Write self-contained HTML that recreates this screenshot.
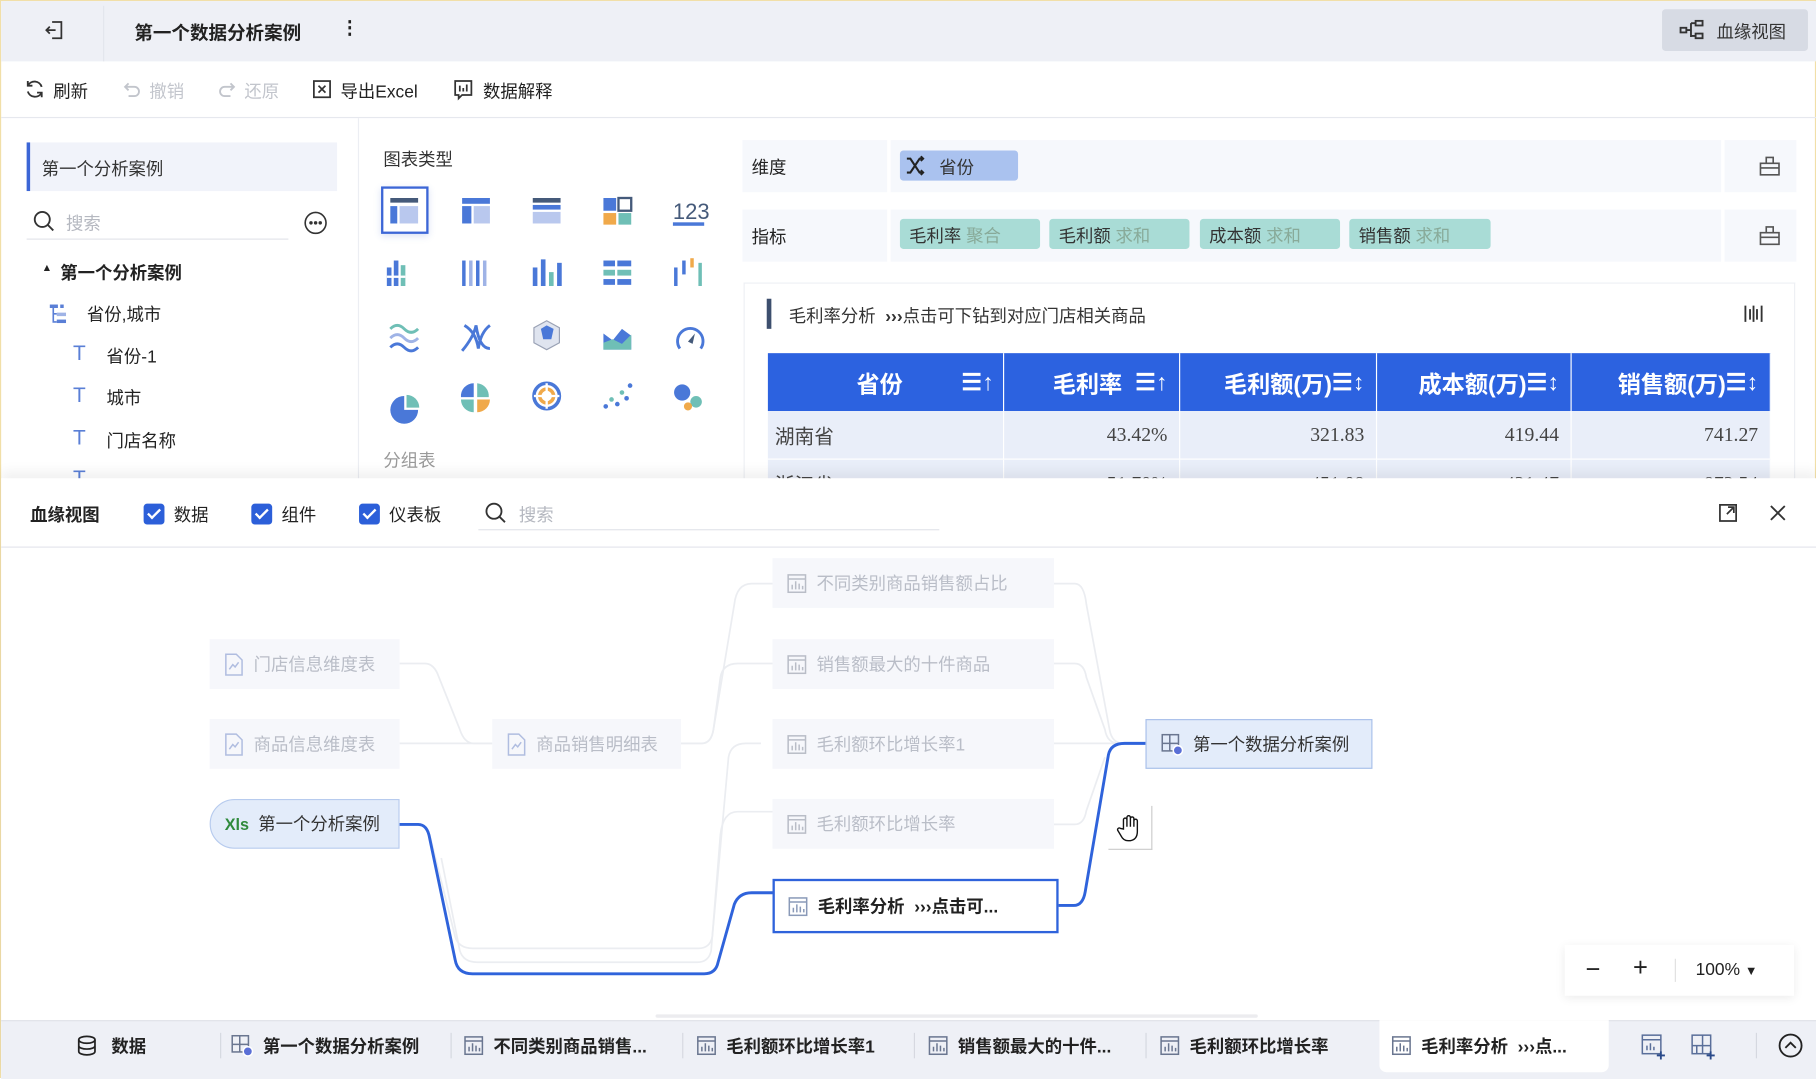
<!DOCTYPE html>
<html><head><meta charset="utf-8">
<style>
*{box-sizing:border-box;margin:0;padding:0}
html,body{width:1816px;height:1078px;overflow:hidden;background:#fff}
body{font-family:"Liberation Sans","Noto Sans CJK SC",sans-serif;color:#222}
#w{position:absolute;left:0;top:0;width:1568px;height:931px;transform:scale(1.1582,1.1579);transform-origin:0 0;background:#fff;border:1px solid #f1dfa8}
.a{position:absolute;white-space:nowrap}
.t15{font-size:15px}
.node{position:absolute;height:43px;background:#f6f7fb;color:#b9bdc7;font-size:15px;display:flex;align-items:center;padding-left:12px;gap:8px}
.tab{position:absolute;top:880px;height:44px;display:flex;align-items:center;gap:8px;font-size:15px;font-weight:bold;color:#222}
.sep{position:absolute;top:891px;width:1px;height:22px;background:#d5d8e0}
.th{position:absolute;top:304px;height:50px;color:#fff;font-weight:bold;font-size:20px;display:flex;align-items:center;justify-content:flex-end;padding-right:10px;border-right:1px solid #fff}
.td{position:absolute;height:41px;display:flex;align-items:center;justify-content:flex-end;padding-right:10px;font-family:"Liberation Serif","Noto Serif CJK SC",serif;font-size:17px;color:#444;border-right:1px solid #fff}
.cb{display:inline-block;width:18px;height:18px;background:#2c5fd9;border-radius:3px;vertical-align:-3px;margin-right:8px;position:relative}
.cb:after{content:"";position:absolute;left:6px;top:2px;width:4px;height:9px;border:solid #fff;border-width:0 2px 2px 0;transform:rotate(45deg)}
</style></head><body><div id="w">
<div class="a" style="left:0;top:0;width:1568px;height:52px;background:#eef0f6"></div>
<div class="a" style="left:88px;top:4px;width:1px;height:48px;background:#e2e5ec"></div>
<svg class="a" style="left:36px;top:15px" width="20" height="20" viewBox="0 0 20 20" fill="none" stroke="#333" stroke-width="1.5"><path d="M8 3h8v14H8M3 10h8M6 7l-3 3 3 3"/></svg>
<div class="a" style="left:115px;top:14px;font-size:16px;font-weight:bold">第一个数据分析案例</div>
<div class="a" style="left:293px;top:13px;font-size:16px;font-weight:bold">⋮</div>
<div class="a" style="left:1434px;top:7px;width:126px;height:36px;background:#d7dbe4;border-radius:3px"></div>
<svg class="a" style="left:1449px;top:16px" width="22" height="18" viewBox="0 0 22 18" fill="none" stroke="#333" stroke-width="1.6"><rect x="1" y="7" width="5" height="4"/><rect x="14" y="1" width="6" height="4"/><rect x="14" y="12" width="6" height="4"/><path d="M6 9h4M10 3v12M10 3h4M10 14h4"/></svg>
<div class="a t15" style="left:1481px;top:16px;color:#333">血缘视图</div>
<div class="a" style="left:0;top:100px;width:1568px;height:1px;background:#e6e8ee"></div>
<svg class="a" style="left:19px;top:66px" width="20" height="20" viewBox="0 0 20 20" fill="none" stroke="#333" stroke-width="1.6"><path d="M16 8a6.5 6.5 0 0 0-12-1M4 12a6.5 6.5 0 0 0 12 1M4 3v4h4M16 17v-4h-4"/></svg>
<div class="a t15" style="left:45px;top:67px">刷新</div>
<svg class="a" style="left:104px;top:67px" width="18" height="18" viewBox="0 0 18 18" fill="none" stroke="#c2c5cc" stroke-width="1.6"><path d="M4 7h7a4 4 0 0 1 0 8H6M6 4 3 7l3 3"/></svg>
<div class="a t15" style="left:128px;top:67px;color:#c2c5cc">撤销</div>
<svg class="a" style="left:186px;top:67px" width="18" height="18" viewBox="0 0 18 18" fill="none" stroke="#c2c5cc" stroke-width="1.6"><path d="M14 7H7a4 4 0 0 0 0 8h5M12 4l3 3-3 3"/></svg>
<div class="a t15" style="left:210px;top:67px;color:#c2c5cc">还原</div>
<svg class="a" style="left:268px;top:67px" width="18" height="18" viewBox="0 0 18 18" fill="none" stroke="#333" stroke-width="1.5"><rect x="2" y="2" width="14" height="14"/><path d="M6 6l6 6M12 6l-6 6"/></svg>
<div class="a t15" style="left:293px;top:67px">导出Excel</div>
<svg class="a" style="left:390px;top:67px" width="18" height="19" viewBox="0 0 18 19" fill="none" stroke="#333" stroke-width="1.5"><path d="M2 2h14v12H8l-3 3v-3H2z"/><path d="M6 6v5M9 8v3M12 5v6"/></svg>
<div class="a t15" style="left:416px;top:67px">数据解释</div>
<div class="a" style="left:22px;top:122px;width:268px;height:42px;background:#f1f3fa;border-left:3px solid #3c66d6"></div>
<div class="a t15" style="left:35px;top:134px;color:#333">第一个分析案例</div>
<svg class="a" style="left:27px;top:180px" width="20" height="20" viewBox="0 0 20 20" fill="none" stroke="#333" stroke-width="1.6"><circle cx="8.5" cy="8.5" r="6.5"/><path d="M13 13l5 5"/></svg>
<div class="a t15" style="left:56px;top:181px;color:#b5b8c0">搜索</div>
<div class="a" style="left:22px;top:205px;width:226px;height:1px;background:#e2e4ea"></div>
<svg class="a" style="left:261px;top:181px" width="21" height="21" viewBox="0 0 21 21" fill="none" stroke="#333" stroke-width="1.4"><circle cx="10.5" cy="10.5" r="9"/><circle cx="6.5" cy="10.5" r=".8" fill="#333"/><circle cx="10.5" cy="10.5" r=".8" fill="#333"/><circle cx="14.5" cy="10.5" r=".8" fill="#333"/></svg>
<div class="a" style="left:35px;top:225px;font-size:9px">▲</div>
<div class="a t15" style="left:51px;top:224px;font-weight:bold">第一个分析案例</div>
<svg class="a" style="left:41px;top:261px" width="18" height="18" viewBox="0 0 18 18"><rect x="1" y="1" width="7" height="3" fill="#5a7fd6"/><rect x="10" y="1" width="3" height="3" fill="#5a7fd6"/><rect x="7" y="8" width="8" height="3" fill="#9fb3e6"/><rect x="7" y="14" width="8" height="3" fill="#5a7fd6"/><path d="M4 4v12h3M4 9h3" stroke="#5a7fd6" stroke-width="1.4" fill="none"/></svg>
<div class="a t15" style="left:74px;top:260px">省份,城市</div>
<div class="a" style="left:62px;top:294px;font-size:18px;color:#5a7fd6">T</div><div class="a t15" style="left:91px;top:296px">省份-1</div>
<div class="a" style="left:62px;top:330px;font-size:18px;color:#5a7fd6">T</div><div class="a t15" style="left:91px;top:332px">城市</div>
<div class="a" style="left:62px;top:367px;font-size:18px;color:#5a7fd6">T</div><div class="a t15" style="left:91px;top:369px">门店名称</div>
<div class="a" style="left:62px;top:402px;font-size:18px;color:#5a7fd6">T</div>
<div class="a" style="left:308px;top:101px;width:1px;height:312px;background:#eceef3"></div>
<div class="a t15" style="left:330px;top:126px;color:#333">图表类型</div>
<div class="a" style="left:328px;top:160px;width:41px;height:41px;border:2px solid #3c66d6;box-shadow:0 2px 6px rgba(60,100,200,.2)"></div>
<svg class="a" style="left:320px;top:160px" width="300" height="210" viewBox="0 0 300 210">
<g transform="translate(16,10)"><rect width="24" height="4" fill="#455a7a"/><rect y="7" width="6" height="15" fill="#4a78d8"/><rect x="8" y="7" width="16" height="15" fill="#b9c8ee"/></g>
<g transform="translate(78,10)"><rect width="24" height="5" fill="#4a78d8"/><rect y="7" width="8" height="15" fill="#4a78d8"/><rect x="10" y="7" width="14" height="15" fill="#b9c8ee"/></g>
<g transform="translate(139,10)"><rect width="24" height="4" fill="#455a7a"/><rect y="6" width="24" height="4" fill="#4a78d8"/><rect y="12" width="24" height="10" fill="#b9c8ee"/></g>
<g transform="translate(200,10)"><rect width="11" height="11" fill="#4a78d8"/><rect x="13" width="11" height="11" fill="none" stroke="#455a7a" stroke-width="2"/><rect y="13" width="11" height="10" fill="#f0a94a"/><rect x="13" y="13" width="11" height="10" fill="#6fbfb6"/></g>
<text x="260" y="28" font-size="19" fill="#455a7a" font-family="Liberation Sans">123</text><rect x="260" y="31" width="27" height="3" fill="#4a78d8"/>
<g fill="#4a78d8"><rect x="19" y="64" width="4" height="22"/><rect x="25" y="68" width="4" height="18" fill="#6fbfb6"/><rect x="13" y="70" width="4" height="16"/><rect x="13" y="77" width="16" height="2" fill="#fff"/></g>
<g fill="#4a78d8"><rect x="78" y="64" width="3" height="22"/><rect x="84" y="64" width="3" height="22" fill="#9fb3e6"/><rect x="90" y="64" width="3" height="22"/><rect x="96" y="64" width="3" height="22" fill="#9fb3e6"/></g>
<g><rect x="139" y="70" width="4" height="16" fill="#4a78d8"/><rect x="146" y="63" width="4" height="23" fill="#4a78d8"/><rect x="153" y="74" width="4" height="12" fill="#6fbfb6"/><rect x="160" y="66" width="4" height="20" fill="#4a78d8"/></g>
<g><rect x="200" y="64" width="24" height="5" fill="#4a78d8"/><rect x="200" y="72" width="24" height="5" fill="#6fbfb6"/><rect x="200" y="80" width="24" height="5" fill="#4a78d8"/><rect x="210" y="62" width="2" height="25" fill="#fff"/></g>
<g><rect x="261" y="70" width="3" height="16" fill="#4a78d8"/><rect x="268" y="64" width="3" height="12" fill="#4a78d8"/><rect x="275" y="62" width="3" height="8" fill="#f0a94a"/><rect x="282" y="66" width="3" height="20" fill="#6fbfb6"/></g>
<g fill="none" stroke-width="2.5"><path d="M16 123q6-6 12 0t12 0" stroke="#6fbfb6"/><path d="M16 131q6-6 12 0t12 0" stroke="#9fb3e6"/><path d="M16 139q6-6 12 0t12 0" stroke="#4a78d8"/></g>
<path d="M78 142q10-12 12-22 3 20 12 20M80 120q10 6 12 20 2-14 10-20" fill="none" stroke="#4a78d8" stroke-width="2.5"/>
<path d="M151 116l11 6v13l-11 6-11-6v-13z" fill="#dfe4ef" stroke="#9aa2b5"/><path d="M146 123l5-3 6 3-2 9h-7z" fill="#4a78d8"/>
<path d="M200 141v-14l8 6 8-10 8 6v12z" fill="#4a78d8"/><path d="M200 141v-6l8-3 8 4 8-8v13z" fill="#6fbfb6"/>
<path d="M266 140a11 11 0 1 1 18 0" fill="none" stroke="#4a78d8" stroke-width="2.5"/><path d="M273 134l6-7-2 9z" fill="#455a7a"/>
<path d="M28 181a12 12 0 1 0 12 12h-12z" fill="#4a78d8"/><path d="M30 180v11h11a11 11 0 0 0-11-11z" fill="#6fbfb6"/>
<path d="M88 170v12h-11a11 11 0 0 1 11-12z" fill="#4a78d8"/><path d="M91 170a11 11 0 0 1 10 12h-10z" fill="#6fbfb6"/><path d="M91 184h11a11 11 0 0 1-11 11z" fill="#f0a94a"/><path d="M88 184v11a11 11 0 0 1-11-11z" fill="#6fbfb6"/>
<circle cx="151" cy="181" r="11" fill="none" stroke="#4a78d8" stroke-width="3"/><circle cx="151" cy="181" r="6" fill="none" stroke="#f0a94a" stroke-width="3"/><path d="M140 181h22M151 170v22" stroke="#fff" stroke-width="2"/>
<g fill="#4a78d8"><circle cx="202" cy="190" r="2"/><circle cx="207" cy="184" r="2" fill="#6fbfb6"/><circle cx="212" cy="188" r="2"/><circle cx="216" cy="178" r="2" fill="#6fbfb6"/><circle cx="220" cy="183" r="2"/><circle cx="223" cy="172" r="2"/></g>
<circle cx="268" cy="178" r="7" fill="#4a78d8"/><circle cx="280" cy="186" r="5" fill="#6fbfb6"/><circle cx="273" cy="190" r="3.5" fill="#f0a94a"/>
</svg>
<div class="a t15" style="left:330px;top:386px;color:#999">分组表</div>
<div class="a" style="left:640px;top:120px;width:125px;height:45px;background:#f6f8fc"></div>
<div class="a" style="left:768px;top:120px;width:717px;height:45px;background:#f6f8fc"></div>
<div class="a" style="left:1488px;top:120px;width:62px;height:45px;background:#f6f8fc"></div>
<div class="a t15" style="left:648px;top:133px">维度</div>
<div class="a" style="left:776px;top:129px;width:102px;height:26px;background:#aac2ef;border-radius:3px"></div>
<svg class="a" style="left:780px;top:133px" width="18" height="18" viewBox="0 0 18 18" fill="none" stroke="#222" stroke-width="1.8"><path d="M2 3h3l8 12h3M2 15h3l8-12h3M14 1l2 2-2 2M14 13l2 2-2 2"/></svg>
<div class="a t15" style="left:810px;top:133px;color:#333">省份</div>
<div class="a" style="left:640px;top:180px;width:125px;height:45px;background:#f6f8fc"></div>
<div class="a" style="left:768px;top:180px;width:717px;height:45px;background:#f6f8fc"></div>
<div class="a" style="left:1488px;top:180px;width:62px;height:45px;background:#f6f8fc"></div>
<div class="a t15" style="left:648px;top:193px">指标</div>
<div class="a t15" style="left:776px;top:188px;width:121px;height:26px;background:#a9dcd6;border-radius:3px;padding:4px 8px;color:#333">毛利率 <span style="color:#8a9">聚合</span></div>
<div class="a t15" style="left:905px;top:188px;width:121px;height:26px;background:#a9dcd6;border-radius:3px;padding:4px 8px;color:#333">毛利额 <span style="color:#8a9">求和</span></div>
<div class="a t15" style="left:1035px;top:188px;width:121px;height:26px;background:#a9dcd6;border-radius:3px;padding:4px 8px;color:#333">成本额 <span style="color:#8a9">求和</span></div>
<div class="a t15" style="left:1164px;top:188px;width:122px;height:26px;background:#a9dcd6;border-radius:3px;padding:4px 8px;color:#333">销售额 <span style="color:#8a9">求和</span></div>
<svg class="a" style="left:1517px;top:132px" width="20" height="20" viewBox="0 0 20 20" fill="none" stroke="#555" stroke-width="1.4"><path d="M2 8h16v10H2zM7 8V3h6v5M2 12h16"/></svg>
<svg class="a" style="left:1517px;top:192px" width="20" height="20" viewBox="0 0 20 20" fill="none" stroke="#555" stroke-width="1.4"><path d="M2 8h16v10H2zM7 8V3h6v5M2 12h16"/></svg>
<div class="a" style="left:641px;top:243px;width:908px;height:170px;border:1px solid #eef0f4;border-bottom:none"></div>
<div class="a" style="left:661px;top:257px;width:4px;height:26px;background:#3d4f6e"></div>
<div class="a t15" style="left:680px;top:261px;color:#333">毛利率分析 &nbsp;<b>›››</b>点击可下钻到对应门店相关商品</div>
<svg class="a" style="left:1504px;top:261px" width="18" height="18" viewBox="0 0 18 18" stroke="#333" stroke-width="1.6"><path d="M2 2v14M6 5v9M9 2v14M12 5v9M16 2v14"/></svg>
<div class="a" style="left:662px;top:304px;width:866px;height:50px;background:#2c62e0"></div>
<div class="th" style="left:662px;width:204px;justify-content:center">省份<span style="position:absolute;right:8px">☰↑</span></div>
<div class="th" style="left:866px;width:152px">毛利率 &nbsp;<span>☰↑</span></div>
<div class="th" style="left:1018px;width:170px">毛利额(万) <span>☰↕</span></div>
<div class="th" style="left:1188px;width:168px">成本额(万) <span>☰↕</span></div>
<div class="th" style="left:1356px;width:172px">销售额(万) <span>☰↕</span></div>
<div class="a" style="left:662px;top:354px;width:866px;height:59px;background:#e9eef9"></div>
<div class="td" style="left:662px;top:354px;width:204px;justify-content:flex-start;padding-left:6px;font-family:'Liberation Sans','Noto Sans CJK SC',sans-serif">湖南省</div>
<div class="td" style="left:866px;top:354px;width:152px">43.42%</div>
<div class="td" style="left:1018px;top:354px;width:170px">321.83</div>
<div class="td" style="left:1188px;top:354px;width:168px">419.44</div>
<div class="td" style="left:1356px;top:354px;width:172px">741.27</div>
<div class="a" style="left:662px;top:395px;width:866px;height:1px;background:#fff"></div>
<div class="td" style="left:662px;top:396px;width:204px;justify-content:flex-start;padding-left:6px;font-family:'Liberation Sans','Noto Sans CJK SC',sans-serif">浙江省</div>
<div class="td" style="left:866px;top:396px;width:152px">51.70%</div>
<div class="td" style="left:1018px;top:396px;width:170px">451.08</div>
<div class="td" style="left:1188px;top:396px;width:168px">421.47</div>
<div class="td" style="left:1356px;top:396px;width:172px">872.54</div>
<div class="a" style="left:0;top:412px;width:1568px;height:519px;background:#fff;box-shadow:0 -6px 10px rgba(0,0,0,.06)"></div>
<div class="a t15" style="left:25px;top:433px;font-weight:bold">血缘视图</div>
<div class="a t15" style="left:123px;top:433px"><span class="cb"></span>数据</div>
<div class="a t15" style="left:216px;top:433px"><span class="cb"></span>组件</div>
<div class="a t15" style="left:309px;top:433px"><span class="cb"></span>仪表板</div>
<svg class="a" style="left:417px;top:432px" width="20" height="20" viewBox="0 0 20 20" fill="none" stroke="#333" stroke-width="1.6"><circle cx="8.5" cy="8.5" r="6.5"/><path d="M13 13l5 5"/></svg>
<div class="a t15" style="left:447px;top:433px;color:#b5b8c0">搜索</div>
<div class="a" style="left:412px;top:456px;width:398px;height:1px;background:#e2e4ea"></div>
<svg class="a" style="left:1482px;top:433px" width="18" height="18" viewBox="0 0 18 18" fill="none" stroke="#333" stroke-width="1.5"><path d="M2 2h14v14H2zM8 10l6-6M9 4h5v5"/></svg>
<svg class="a" style="left:1526px;top:434px" width="16" height="16" viewBox="0 0 16 16" stroke="#333" stroke-width="1.6"><path d="M2 2l12 12M14 2L2 14"/></svg>
<div class="a" style="left:0;top:471px;width:1568px;height:1px;background:#e3e5eb"></div>
<svg class="a" style="left:0;top:472px" width="1568" height="408" viewBox="0 472 1568 408" fill="none">
<g stroke="#ebedf1" stroke-width="1.5">
<path d="M344 572h22q8 0 12 12l18 45q4 12 12 12h16"/>
<path d="M344 641h80"/>
<path d="M587 641h18q8 0 10-12l18-108q2-18 15-18h18"/>
<path d="M587 641h18q8 0 10-12l6-45q2-12 15-12h30"/>
<path d="M909 503h18q8 0 10 18l20 108q2 12 12 12h19"/>
<path d="M909 572h18q8 0 10 12l16 45q2 12 12 12"/>
<path d="M909 641h79"/>
<path d="M909 711h18q8 0 10-12l16-46"/>
<path d="M370 720l22 88q3 10 15 10h195q10 0 12-10l14-155q2-12 15-12h13"/>
<path d="M380 740l16 80q3 10 15 10h190q10 0 12-10l8-100q2-20 15-20h30"/>
</g>
<g stroke="#2f63db" stroke-width="2.5">
<path d="M344 711h16q8 0 10 12l22 105q2 12 15 12h200q10 0 12-10l14-50q4-10 15-10h18"/>
<path d="M912 781h14q8 0 10-12l20-118q2-10 14-10h18"/>
</g>
</svg>
<div class="node" style="left:666px;top:481px;width:243px">
<svg width="18" height="18" viewBox="0 0 18 18" fill="none" stroke="#b9bdc7" stroke-width="1.3"><rect x="1.5" y="1.5" width="15" height="15"/><path d="M1.5 5h15M5 14v-4M8 14v-7M11 14v-5M14 14v-3"/></svg>不同类别商品销售额占比</div>
<div class="node" style="left:666px;top:551px;width:243px"><svg width="18" height="18" viewBox="0 0 18 18" fill="none" stroke="#b9bdc7" stroke-width="1.3"><rect x="1.5" y="1.5" width="15" height="15"/><path d="M1.5 5h15M5 14v-4M8 14v-7M11 14v-5M14 14v-3"/></svg>销售额最大的十件商品</div>
<div class="node" style="left:666px;top:620px;width:243px"><svg width="18" height="18" viewBox="0 0 18 18" fill="none" stroke="#b9bdc7" stroke-width="1.3"><rect x="1.5" y="1.5" width="15" height="15"/><path d="M1.5 5h15M5 14v-4M8 14v-7M11 14v-5M14 14v-3"/></svg>毛利额环比增长率1</div>
<div class="node" style="left:666px;top:689px;width:243px"><svg width="18" height="18" viewBox="0 0 18 18" fill="none" stroke="#b9bdc7" stroke-width="1.3"><rect x="1.5" y="1.5" width="15" height="15"/><path d="M1.5 5h15M5 14v-4M8 14v-7M11 14v-5M14 14v-3"/></svg>毛利额环比增长率</div>
<div class="node" style="left:666px;top:758px;width:247px;height:47px;background:#fff;border:2.5px solid #2f63db;color:#222;font-weight:bold;padding-left:11px"><svg width="18" height="18" viewBox="0 0 18 18" fill="none" stroke="#8a9ab8" stroke-width="1.3"><rect x="1.5" y="1.5" width="15" height="15"/><path d="M1.5 5h15M5 14v-4M8 14v-7M11 14v-5M14 14v-3"/></svg>毛利率分析 &nbsp;›››点击可...</div>
<div class="node" style="left:180px;top:551px;width:164px"><svg width="18" height="20" viewBox="0 0 18 20" fill="none" stroke="#b0bde0" stroke-width="1.3"><path d="M2 1h9l5 5v13H2z"/><path d="M5 14l3-4 2 2 3-4"/></svg>门店信息维度表</div>
<div class="node" style="left:180px;top:620px;width:164px"><svg width="18" height="20" viewBox="0 0 18 20" fill="none" stroke="#b0bde0" stroke-width="1.3"><path d="M2 1h9l5 5v13H2z"/><path d="M5 14l3-4 2 2 3-4"/></svg>商品信息维度表</div>
<div class="node" style="left:424px;top:620px;width:163px"><svg width="18" height="20" viewBox="0 0 18 20" fill="none" stroke="#b0bde0" stroke-width="1.3"><path d="M2 1h9l5 5v13H2z"/><path d="M5 14l3-4 2 2 3-4"/></svg>商品销售明细表</div>
<div class="node" style="left:180px;top:689px;width:164px;background:#e3ecfa;border:1px solid #b7cbee;border-radius:22px 0 0 22px;color:#333"><span style="color:#2f8a3c;font-size:14px;font-weight:bold">Xls</span>第一个分析案例</div>
<div class="node" style="left:988px;top:620px;width:196px;background:#e3ecfa;border:1px solid #a8c0ea;color:#333"><svg width="20" height="20" viewBox="0 0 20 20" fill="none" stroke="#6a7690" stroke-width="1.3"><rect x="1.5" y="1.5" width="14" height="14"/><path d="M1.5 9h14M8 1.5v14"/><circle cx="15" cy="15" r="4" fill="#5a6fd6" stroke="#fff"/></svg>第一个数据分析案例</div>
<div class="a" style="left:956px;top:695px;width:38px;height:38px;border-right:1px solid #ccc;border-bottom:1px solid #ccc"></div>
<svg class="a" style="left:963px;top:702px" width="22" height="24" viewBox="0 0 22 24" fill="#fff" stroke="#111" stroke-width="1.2"><path d="M6 13V5a1.5 1.5 0 0 1 3 0v6V3a1.5 1.5 0 0 1 3 0v8V4a1.5 1.5 0 0 1 3 0v7V6a1.5 1.5 0 0 1 3 0v9q0 7-6 8h-2q-4 0-6-4l-3-5a1.5 1.5 0 0 1 2.5-1.5z"/></svg>
<div class="a" style="left:1350px;top:815px;width:198px;height:44px;background:#fff;box-shadow:0 2px 8px rgba(0,0,0,.08)"></div>
<div class="a" style="left:1368px;top:823px;font-size:22px">−</div>
<div class="a" style="left:1409px;top:822px;font-size:22px">+</div>
<div class="a" style="left:1445px;top:827px;width:1px;height:20px;background:#e0e0e0"></div>
<div class="a t15" style="left:1463px;top:828px">100% <span style="font-size:11px">▼</span></div>
<div class="a" style="left:565px;top:875px;width:520px;height:3px;background:#ececef;border-radius:2px"></div>
<div class="a" style="left:0;top:880px;width:1568px;height:51px;background:#eef0f6;border-top:1px solid #e0e2e8"></div>
<div class="a" style="left:1190px;top:880px;width:198px;height:45px;background:#fff;border-radius:0 0 6px 6px"></div>
<div class="tab" style="left:65px;top:880px"><svg width="18" height="18" viewBox="0 0 18 18" fill="none" stroke="#222" stroke-width="1.5"><ellipse cx="9" cy="4" rx="7" ry="3"/><path d="M2 4v10c0 4 14 4 14 0V4M2 9c0 4 14 4 14 0"/></svg>&nbsp;数据</div>
<div class="sep" style="left:189px"></div>
<div class="tab" style="left:198px"><svg width="20" height="20" viewBox="0 0 20 20" fill="none" stroke="#6a7690" stroke-width="1.3"><rect x="1.5" y="1.5" width="14" height="14"/><path d="M1.5 9h14M8 1.5v14"/><circle cx="15" cy="15" r="4" fill="#5a6fd6" stroke="#fff"/></svg>第一个数据分析案例</div>
<div class="sep" style="left:388px"></div>
<div class="tab" style="left:399px"><svg width="18" height="18" viewBox="0 0 18 18" fill="none" stroke="#6a7690" stroke-width="1.3"><rect x="1.5" y="1.5" width="15" height="15"/><path d="M1.5 5h15M5 14v-4M8 14v-7M11 14v-5M14 14v-3"/></svg>不同类别商品销售...</div>
<div class="sep" style="left:588px"></div>
<div class="tab" style="left:600px"><svg width="18" height="18" viewBox="0 0 18 18" fill="none" stroke="#6a7690" stroke-width="1.3"><rect x="1.5" y="1.5" width="15" height="15"/><path d="M1.5 5h15M5 14v-4M8 14v-7M11 14v-5M14 14v-3"/></svg>毛利额环比增长率1</div>
<div class="sep" style="left:788px"></div>
<div class="tab" style="left:800px"><svg width="18" height="18" viewBox="0 0 18 18" fill="none" stroke="#6a7690" stroke-width="1.3"><rect x="1.5" y="1.5" width="15" height="15"/><path d="M1.5 5h15M5 14v-4M8 14v-7M11 14v-5M14 14v-3"/></svg>销售额最大的十件...</div>
<div class="sep" style="left:988px"></div>
<div class="tab" style="left:1000px"><svg width="18" height="18" viewBox="0 0 18 18" fill="none" stroke="#6a7690" stroke-width="1.3"><rect x="1.5" y="1.5" width="15" height="15"/><path d="M1.5 5h15M5 14v-4M8 14v-7M11 14v-5M14 14v-3"/></svg>毛利额环比增长率</div>
<div class="tab" style="left:1200px"><svg width="18" height="18" viewBox="0 0 18 18" fill="none" stroke="#6a7690" stroke-width="1.3"><rect x="1.5" y="1.5" width="15" height="15"/><path d="M1.5 5h15M5 14v-4M8 14v-7M11 14v-5M14 14v-3"/></svg>毛利率分析 &nbsp;›››点...</div>
<svg class="a" style="left:1415px;top:891px" width="24" height="24" viewBox="0 0 24 24" fill="none" stroke="#5a6f9a" stroke-width="1.3"><rect x="2" y="2" width="16" height="16"/><path d="M2 6h16M6 15v-4M9 15v-6M12 15v-3"/><path d="M18 16v7M14.5 19.5h7" stroke="#2a4a8a" stroke-width="1.6"/></svg>
<svg class="a" style="left:1458px;top:891px" width="24" height="24" viewBox="0 0 24 24" fill="none" stroke="#5a6f9a" stroke-width="1.3"><rect x="2" y="2" width="16" height="16"/><path d="M2 11h16M11 2v16M6 11v7"/><path d="M18 16v7M14.5 19.5h7" stroke="#2a4a8a" stroke-width="1.6"/></svg>
<div class="sep" style="left:1515px"></div>
<svg class="a" style="left:1534px;top:891px" width="22" height="22" viewBox="0 0 22 22" fill="none" stroke="#222" stroke-width="1.6"><circle cx="11" cy="11" r="9.5"/><path d="M6.5 13l4.5-4.5 4.5 4.5"/></svg>
</div></body></html>
